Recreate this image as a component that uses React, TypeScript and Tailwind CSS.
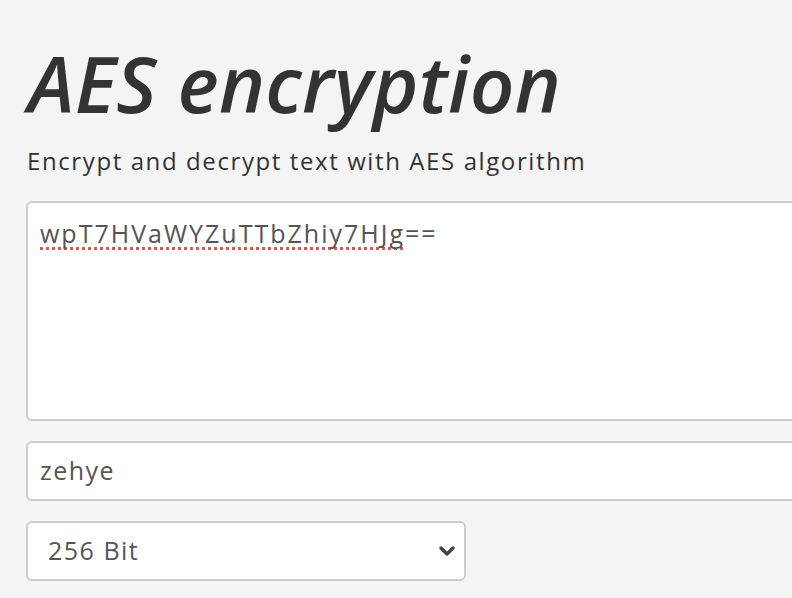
import React from 'react';

const font = { fontFamily: '"Open Sans", "Noto Sans", sans-serif' };

const App: React.FC = () => {
  return (
    <div className="h-[598px] w-[792px] overflow-hidden bg-[#f4f4f4] text-[#333]" style={font}>
      <div className="pl-[26px] pt-[38px]">
        {/* Title */}
        <h1 className="pl-[2px] text-[78px] font-semibold italic leading-[90px] tracking-[0.3px]">AES encryption</h1>
        <p className="mt-[17px] pl-[1px] text-[24px] leading-[32px] tracking-[1.6px] text-[#333]">
          Encrypt and decrypt text with AES algorithm
        </p>

        {/* Cipher text */}
        <div className="mt-[24px] h-[220px] w-[900px] rounded-[6px] border-2 border-[#cccccc] bg-white px-[12px] pt-[13px] text-[25px] leading-[34px] tracking-[2px] text-[#555]">
          <span className="underline decoration-dotted decoration-[#e5534b] decoration-[3px] underline-offset-[4px] [text-decoration-skip-ink:none]">wpT7HVaWYZuTTbZhiy7HJg</span>==
        </div>

        {/* Password */}
        <div className="mt-[20px] flex h-[60px] w-[900px] items-center rounded-[6px] border-2 border-[#cccccc] bg-white px-[12px] text-[25px] tracking-[1.5px] text-[#555]">
          zehye
        </div>

        {/* Key size */}
        <div className="mt-[20px] flex h-[60px] w-[440px] items-center justify-between rounded-[6px] border-2 border-[#cccccc] bg-white pl-[20px] pr-[7px] text-[25px] tracking-[1.5px] text-[#555]">
          <span>256 Bit</span>
          <svg width="18" height="14" viewBox="0 0 18 14" className="mr-[1px]">
            <path d="M3 4 L9 10 L15 4" fill="none" stroke="#444" strokeWidth="3.5" strokeLinecap="round" strokeLinejoin="round" />
          </svg>
        </div>
      </div>
    </div>
  );
};

export default App;
